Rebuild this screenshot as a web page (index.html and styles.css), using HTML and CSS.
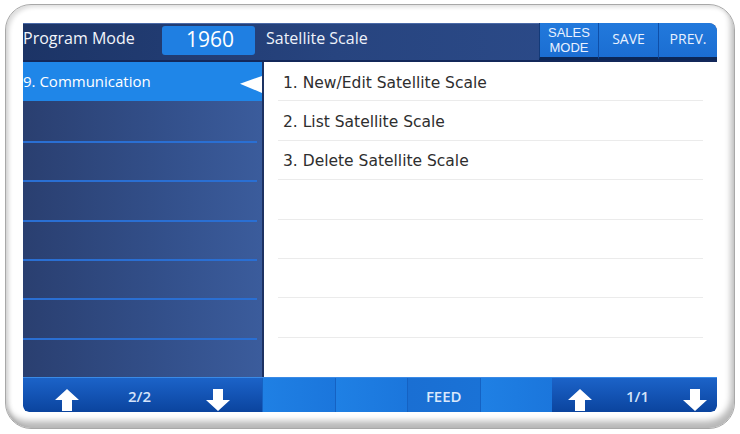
FILE: index.html
```html
<!DOCTYPE html>
<html>
<head>
<meta charset="utf-8">
<link rel="stylesheet" href="styles.css">
</head>
<body>
<div class="frame">
  <div class="screen">
    <header class="topbar">
      <div class="title">Program Mode</div>
      <div class="code">1960</div>
      <div class="subtitle">Satellite Scale</div>
      <div class="tbtns">
        <div class="tbtn two"><span>SALES</span><span>MODE</span></div>
        <div class="tbtn">SAVE</div>
        <div class="tbtn last">PREV.</div>
      </div>
    </header>
    <main class="body">
      <nav class="menu">
        <div class="mrow sel">9. Communication<span class="notch"></span></div>
        <div class="mrow"></div>
        <div class="mrow line"></div>
        <div class="mrow line"></div>
        <div class="mrow line"></div>
        <div class="mrow line"></div>
        <div class="mrow line"></div>
        <div class="mrow line"></div>
      </nav>
      <section class="list">
        <div class="lrow">1. New/Edit Satellite Scale</div>
        <div class="lrow">2. List Satellite Scale</div>
        <div class="lrow">3. Delete Satellite Scale</div>
        <div class="lrow"></div>
        <div class="lrow"></div>
        <div class="lrow"></div>
        <div class="lrow"></div>
        <div class="lrow last"></div>
      </section>
    </main>
    <footer class="bottombar">
      <div class="pager left">
        <svg class="arrow" viewBox="0 0 24 22"><polygon points="12,0 24,11 17,11 17,22 7,22 7,11 0,11" fill="#fff"/></svg>
        <span class="ptext">2/2</span>
        <svg class="arrow" viewBox="0 0 24 22"><polygon points="7,0 17,0 17,11 24,11 12,22 0,11 7,11" fill="#fff"/></svg>
      </div>
      <div class="fbtns">
        <div class="fbtn"></div>
        <div class="fbtn"></div>
        <div class="fbtn feed">FEED</div>
        <div class="fbtn"></div>
      </div>
      <div class="pager right">
        <svg class="arrow" viewBox="0 0 24 22"><polygon points="12,0 24,11 17,11 17,22 7,22 7,11 0,11" fill="#fff"/></svg>
        <span class="ptext">1/1</span>
        <svg class="arrow" viewBox="0 0 24 22"><polygon points="7,0 17,0 17,11 24,11 12,22 0,11 7,11" fill="#fff"/></svg>
      </div>
    </footer>
  </div>
</div>
</body>
</html>
```

FILE: styles.css
```css
* { box-sizing: border-box; }
html, body { margin: 0; padding: 0; background: #fff; }
body { width: 740px; height: 434px; overflow: hidden; font-family: "Open Sans", "DejaVu Sans", sans-serif; }

.frame {
  margin: 4px 0 0 5px;
  width: 730px;
  height: 425px;
  border: 1px solid #a8a8a8;
  border-radius: 26px;
  padding: 18px 17px 0 17px;
  background: #fff;
  box-shadow: inset -3px -7px 6px rgba(0,0,0,0.28), inset 3px 2px 4px rgba(0,0,0,0.14);
}

.screen {
  width: 694px;
  height: 389px;
  overflow: hidden;
  display: flex;
  flex-direction: column;
  border-radius: 0 8px 6px 6px;
}

/* header */
.topbar {
  height: 39px;
  flex: none;
  display: flex;
  align-items: stretch;
  background: linear-gradient(90deg, #1c3466 0%, #27447f 45%, #2e4e8e 100%);
  border-top: 1px solid #4a6aa8;
  border-bottom: 2px solid #13285a;
  color: #fff;
}
.title {
  width: 139px;
  font-size: 16px;
  line-height: 29px;
  color: #f2f5fb;
  white-space: nowrap;
}
.code {
  width: 93px;
  margin: 2px 0 5px 0;
  background: #1f7fe2;
  border-radius: 3px;
  font-size: 21px;
  line-height: 27px;
  text-align: center;
  color: #fff;
  padding-left: 3px;
}
.subtitle {
  margin-left: 11px;
  flex: 1;
  font-size: 16px;
  line-height: 29px;
  color: #eef2fa;
}
.tbtns {
  display: flex;
  width: 178px;
  margin-top: -1px;
}
.tbtn {
  width: 60px;
  background: linear-gradient(180deg, #2279dc 0%, #1b6ed2 100%);
  border-left: 1px solid #0f4fa8;
  border-bottom: 3px solid #0b2757;
  color: #e9f1ff;
  font-size: 14px;
  text-align: center;
  line-height: 32px;
}
.tbtn:first-child { width: 59px; border-left: 1px solid #123a7a; }
.tbtn.last { width: 59px; border-top-right-radius: 8px; }
.tbtn.two {
  display: flex;
  flex-direction: column;
  align-items: center;
  justify-content: center;
  font-family: "Liberation Sans", "Open Sans", sans-serif;
  font-size: 13px;
  line-height: 15px;
  padding-bottom: 1px;
}

/* body */
.body {
  height: 315px;
  flex: none;
  display: flex;
}
.menu {
  width: 241px;
  flex: none;
  display: grid;
  grid-template-rows: repeat(8, 1fr);
  background: linear-gradient(90deg, #2a3f70 0%, #33508b 60%, #3b5c9c 100%);
  border-right: 2px solid #1d3262;
}
.mrow { position: relative; }
.mrow.line { border-top: 2px solid #2a6fd3; margin-right: 5px; }
.mrow.sel {
  background: #1f86e8;
  color: #fff;
  font-size: 15px;
  line-height: 38px;
  white-space: nowrap;
}
.notch {
  position: absolute;
  right: 0;
  top: 14px;
  width: 22px;
  height: 17px;
  background: #fff;
  clip-path: polygon(0 45%, 100% 0, 100% 100%);
}
.list {
  flex: 1;
  background: #fff;
  display: grid;
  grid-template-rows: repeat(8, 1fr);
}
.lrow {
  margin: 0 14px;
  padding-left: 5px;
  padding-top: 3px;
  border-bottom: 1px solid #ebebeb;
  font-family: "DejaVu Sans", sans-serif;
  font-size: 15.5px;
  color: #2e2e2e;
  display: flex;
  align-items: center;
}
.lrow.last { border-bottom: none; }

/* bottom bar */
.bottombar {
  height: 35px;
  flex: none;
  display: flex;
  border-top: 1px solid #3a8ae6;
}
.pager {
  display: flex;
  align-items: center;
  justify-content: space-between;
  background: linear-gradient(180deg, #1c63c8 0%, #1455b6 45%, #0b449e 100%);
  padding-top: 9px;
}
.pager.left { width: 239px; padding-left: 32px; padding-right: 32px; border-bottom-left-radius: 6px; }
.pager.right { width: 165px; padding-left: 16px; padding-right: 10px; border-bottom-right-radius: 6px; }
.arrow { width: 24px; height: 22px; display: block; align-self: flex-end; margin-bottom: 1px; }
.ptext {
  color: #d4e3fa;
  font-size: 15px;
  font-weight: 600;
  margin-top: -8px;
}
.pager.left .ptext { margin-right: 6px; }
.fbtns {
  width: 290px;
  display: flex;
}
.fbtn {
  flex: 1;
  background: linear-gradient(90deg, #1f80e4 0%, #1b76dc 100%);
  border-left: 1px solid #1562c3;
  color: #dbe8fb;
  font-size: 15px;
  font-weight: 600;
  display: flex;
  align-items: center;
  justify-content: center;
  padding-top: 2px;
}
.fbtn.feed { background: linear-gradient(90deg, #1a6fd3 0%, #1a72d6 100%); }
```
